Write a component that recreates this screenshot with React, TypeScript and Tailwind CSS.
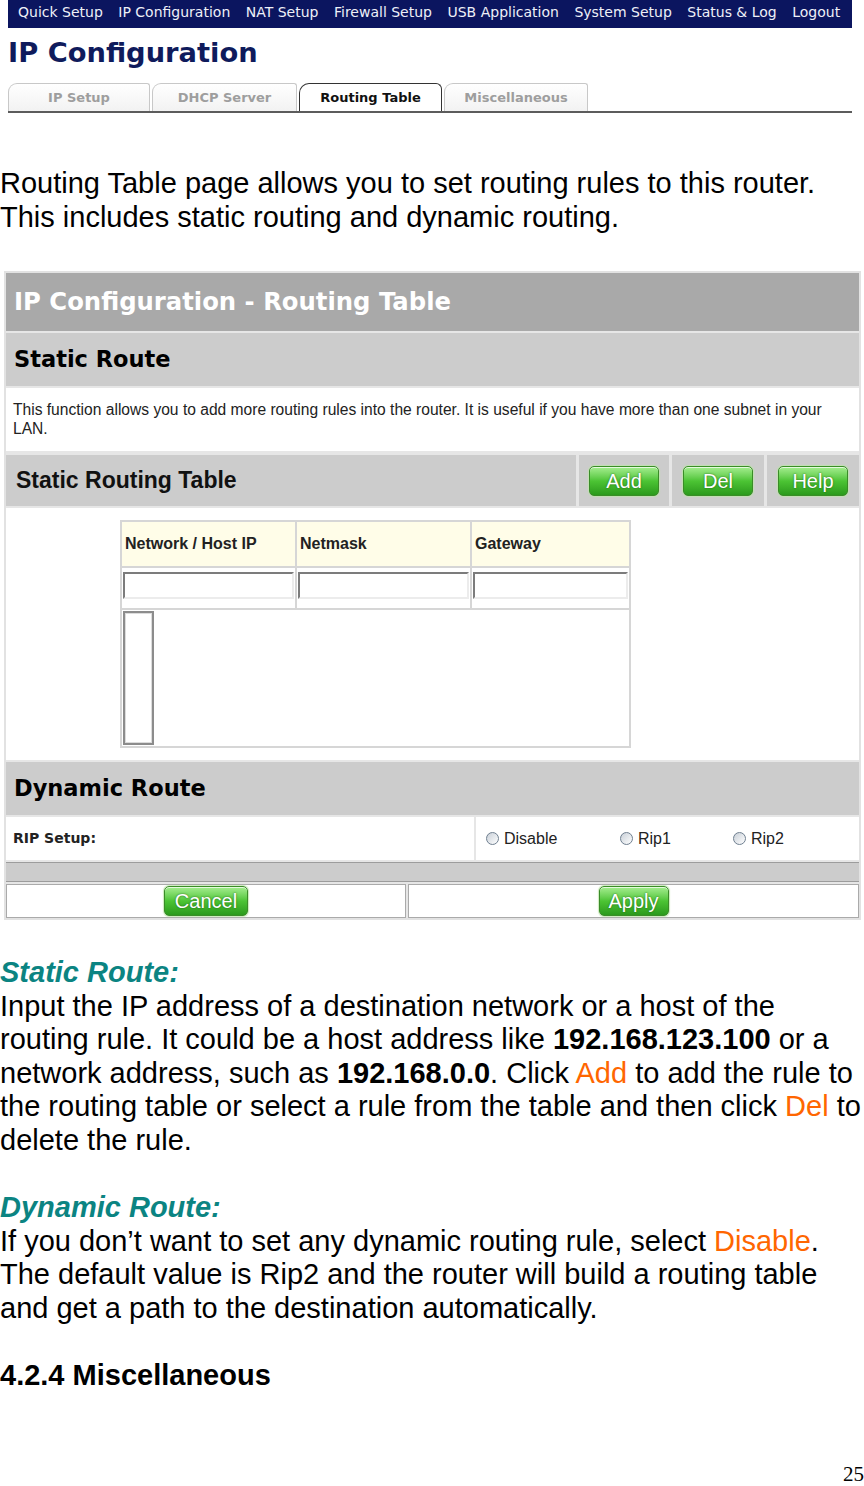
import React from 'react';

const navItems = [
  'Quick Setup',
  'IP Configuration',
  'NAT Setup',
  'Firewall Setup',
  'USB Application',
  'System Setup',
  'Status & Log',
  'Logout',
];

const tabs = [
  { label: 'IP Setup', w: 'w-[142px]', active: false },
  { label: 'DHCP Server', w: 'w-[145px]', active: false },
  { label: 'Routing Table', w: 'w-[143px]', active: true },
  { label: 'Miscellaneous', w: 'w-[144px]', active: false },
];

const verdana = "font-['DejaVu_Sans',Verdana,sans-serif]";
const arial = "font-['Liberation_Sans',Arial,sans-serif]";

function GreenButton({ label, w }: { label: string; w: string }) {
  return (
    <span
      className={`${w} inline-flex h-[30px] items-center justify-center rounded-[5px] border border-[#3a8c28] bg-linear-to-b from-[#a4ee8e] via-[#4cc434] to-[#2b9a1c] text-[20px] leading-none text-white shadow-[inset_0_1px_0_rgba(255,255,255,0.7),0_0_1px_1px_rgba(190,230,170,0.8)] [text-shadow:0_0_2px_rgba(25,90,15,0.9)] ${arial}`}
    >
      {label}
    </span>
  );
}

function Radio({ label, w }: { label: string; w: string }) {
  return (
    <span className={`${w} flex items-center gap-[5px]`}>
      <span className="h-[13px] w-[13px] rounded-full border border-[#6f7f90] bg-linear-to-br from-[#c9d0d8] to-white" />
      <span className={`text-[16px] text-[#222] ${arial}`}>{label}</span>
    </span>
  );
}

function TextInput() {
  return (
    <div className="mx-[1px] mt-[4px] h-[27px] border-2 border-t-[#7c7c7c] border-l-[#7c7c7c] border-r-[#ececec] border-b-[#ececec] bg-white" />
  );
}

function RouterPanel() {
  return (
    <div className="mx-[4px] mt-[37px] flex w-[857px] flex-col gap-[2px] border-2 border-[#e2e2e2] bg-[#e6e6e6]">
      <div className={`flex h-[58px] items-center bg-[#a9a9a9] pl-[8px] text-[24.3px] font-bold text-white ${verdana}`}>
        IP Configuration - Routing Table
      </div>
      <div className={`flex h-[53px] items-center bg-[#cccccc] pl-[8px] text-[22.5px] font-bold text-black ${verdana}`}>
        Static Route
      </div>
      <div className={`h-[63px] bg-white px-[7px] pt-[12px] text-[15.6px] leading-[19px] text-[#222] ${arial}`}>
        This function allows you to add more routing rules into the router. It is useful if you have more than one subnet in your LAN.
      </div>
      <div className="mt-[2px] flex h-[51px] gap-[3px]">
        <div className={`flex flex-1 items-center bg-[#cccccc] pl-[10px] text-[23px] font-bold text-[#111] ${arial}`}>
          Static Routing Table
        </div>
        <div className="flex w-[90px] items-center justify-center bg-[#cccccc]">
          <GreenButton label="Add" w="w-[70px]" />
        </div>
        <div className="flex w-[92px] items-center justify-center bg-[#cccccc]">
          <GreenButton label="Del" w="w-[70px]" />
        </div>
        <div className="flex w-[92px] items-center justify-center bg-[#cccccc]">
          <GreenButton label="Help" w="w-[70px]" />
        </div>
      </div>
      <div className="bg-white pb-[12px] pl-[114px] pt-[12px]">
        <div className="w-[511px] border-2 border-[#d6d6d6] bg-[#d6d6d6]">
          <div className="grid grid-cols-[173px_173px_157px] gap-[2px]">
            {['Network / Host IP', 'Netmask', 'Gateway'].map((h) => (
              <div
                key={h}
                className={`flex h-[44px] items-center bg-[#fffde8] pl-[3px] text-[16px] font-bold text-[#222] ${arial}`}
              >
                {h}
              </div>
            ))}
            {[0, 1, 2].map((i) => (
              <div key={i} className="h-[40px] bg-white">
                <TextInput />
              </div>
            ))}
          </div>
          <div className="mt-[2px] h-[136px] bg-white pl-[1px] pt-[1px]">
            <div className="h-[134px] w-[31px] border-2 border-[#8c8c8c] shadow-[inset_0_0_0_1px_#dcdcdc]" />
          </div>
        </div>
      </div>
      <div className={`flex h-[53px] items-center bg-[#cccccc] pl-[8px] text-[22.5px] font-bold text-black ${verdana}`}>
        Dynamic Route
      </div>
      <div className="flex h-[43px] gap-[2px]">
        <div className={`flex w-[468px] items-center bg-white pl-[7px] text-[14px] font-bold text-[#222] ${verdana}`}>
          RIP Setup:
        </div>
        <div className="flex flex-1 items-center bg-white pl-[10px]">
          <Radio label="Disable" w="w-[134px]" />
          <Radio label="Rip1" w="w-[113px]" />
          <Radio label="Rip2" w="w-[100px]" />
        </div>
      </div>
      <div className="h-[20px] border-y border-[#9c9c9c] bg-[#cccccc]" />
      <div className="flex h-[34px] gap-[2px]">
        <div className="flex w-[400px] items-center justify-center border border-[#aaaaaa] bg-white">
          <GreenButton label="Cancel" w="w-[84px]" />
        </div>
        <div className="flex flex-1 items-center justify-center border border-[#aaaaaa] bg-white">
          <GreenButton label="Apply" w="w-[70px]" />
        </div>
      </div>
    </div>
  );
}

export default function App() {
  return (
    <div className={`flex h-[1486px] w-[864px] flex-col overflow-hidden bg-white ${arial}`}>
      <div className={`ml-[8px] mr-[12px] flex h-[28px] items-center gap-[15.5px] bg-[#0b155f] pb-[3px] pl-[10px] text-[14px] text-[#eef0f8] ${verdana}`}>
        {navItems.map((n) => (
          <span key={n} className="whitespace-nowrap">
            {n}
          </span>
        ))}
      </div>
      <div className="h-[56px] pl-[8px] pt-[11px]">
        <h1 className={`text-[27.3px] font-bold leading-none text-[#0f1b5c] ${verdana}`}>IP Configuration</h1>
      </div>
      <div className="ml-[8px] mr-[12px] flex h-[29px] items-end gap-[2px] border-b-2 border-[#5c5c5c]">
        {tabs.map((t) => (
          <div
            key={t.label}
            className={`${t.w} flex h-[28px] items-center justify-center text-[13px] font-bold ${verdana} ${
              t.active
                ? 'rounded-tl-[10px] rounded-tr-[6px] border-[1.5px] border-b-0 border-[#333333] bg-white text-[#111]'
                : 'rounded-tl-[9px] rounded-tr-[3px] border border-b-0 border-[#c8c8c8] bg-linear-to-b from-white to-[#f2f2f2] text-[#9e9e9e]'
            }`}
          >
            {t.label}
          </div>
        ))}
      </div>

      <p className="mt-[53px] whitespace-nowrap text-[29px] leading-[34px] text-black">
        Routing Table page allows you to set routing rules to this router.
        <br />
        This includes static routing and dynamic routing.
      </p>

      <RouterPanel />

      <div className="mt-[36px] whitespace-nowrap text-[29px] leading-[33.6px] text-black">
        <p className="font-bold italic text-[#0b8482]">Static Route:</p>
        <p>
          Input the IP address of a destination network or a host of the
          <br />
          routing rule. It could be a host address like <b>192.168.123.100</b> or a
          <br />
          network address, such as <b>192.168.0.0</b>. Click <span className="text-[#ff6600]">Add</span> to add the rule to
          <br />
          the routing table or select a rule from the table and then click <span className="text-[#ff6600]">Del</span> to
          <br />
          delete the rule.
        </p>
        <p className="h-[33.6px]" />
        <p className="font-bold italic text-[#0b8482]">Dynamic Route:</p>
        <p>
          If you don’t want to set any dynamic routing rule, select <span className="text-[#ff6600]">Disable</span>.
          <br />
          The default value is Rip2 and the router will build a routing table
          <br />
          and get a path to the destination automatically.
        </p>
        <p className="h-[33.6px]" />
        <p className="font-bold">4.2.4 Miscellaneous</p>
      </div>

      <div className="mb-[1px] mt-auto self-end text-[21px] leading-none text-black font-['Liberation_Serif','Times_New_Roman',serif]">
        25
      </div>
    </div>
  );
}
